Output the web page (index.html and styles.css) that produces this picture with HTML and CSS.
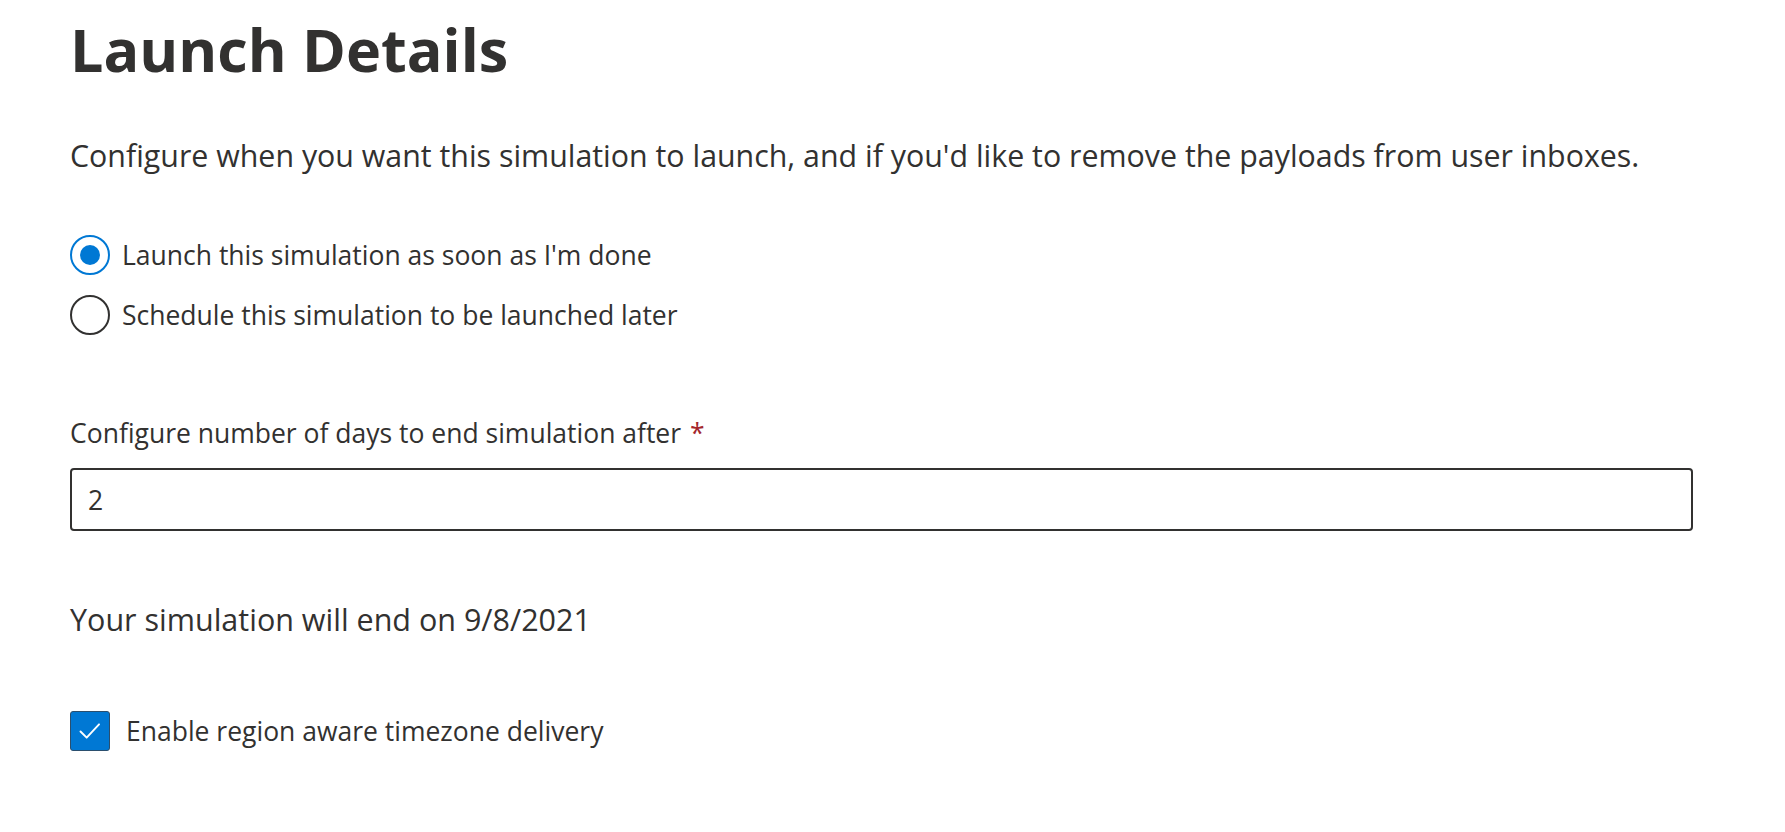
FILE: index.html
```html
<!DOCTYPE html>
<html lang="en">
<head>
<meta charset="utf-8">
<title>Launch Details</title>
<link rel="stylesheet" href="styles.css">
</head>
<body>
<main class="page">
  <h1 class="title">Launch Details</h1>
  <p class="desc">Configure when you want this simulation to launch, and if you'd like to remove the payloads from user inboxes.</p>

  <div class="radio-group" role="radiogroup">
    <label class="radio-row">
      <span class="radio radio-checked"><span class="radio-dot"></span></span>
      <span class="radio-label">Launch this simulation as soon as I'm done</span>
    </label>
    <label class="radio-row">
      <span class="radio"></span>
      <span class="radio-label">Schedule this simulation to be launched later</span>
    </label>
  </div>

  <div class="field">
    <label class="field-label">Configure number of days to end simulation after<span class="req">*</span></label>
    <div class="input">2</div>
  </div>

  <p class="end-date">Your simulation will end on 9/8/2021</p>

  <label class="check-row">
    <span class="checkbox">
      <svg viewBox="0 0 40 40" width="38" height="38" aria-hidden="true">
        <path d="M10 20.5 L16.5 27 L29.5 13" fill="none" stroke="#ffffff" stroke-width="2" stroke-linecap="round" stroke-linejoin="round"/>
      </svg>
    </span>
    <span class="check-label">Enable region aware timezone delivery</span>
  </label>
</main>
</body>
</html>
```

FILE: styles.css
```css
html, body {
  margin: 0;
  padding: 0;
  background: #ffffff;
}

body {
  font-family: "Open Sans", "Noto Sans", "Liberation Sans", sans-serif;
  color: #323130;
}

.page {
  display: flex;
  flex-direction: column;
  align-items: flex-start;
  padding: 14px 92px 0 70px;
}

.title {
  margin: 0;
  font-size: 59.3px;
  font-weight: 700;
  line-height: 70px;
  color: #323130;
}

.desc {
  margin: 52px 0 0;
  font-size: 30.35px;
  line-height: 40px;
}

.radio-group {
  margin-top: 59px;
  display: flex;
  flex-direction: column;
  gap: 20px;
}

.radio-row {
  display: flex;
  align-items: center;
  height: 40px;
  gap: 12px;
  cursor: pointer;
}

.radio {
  box-sizing: border-box;
  width: 40px;
  height: 40px;
  border: 2px solid #323130;
  border-radius: 50%;
  display: flex;
  align-items: center;
  justify-content: center;
  flex: none;
}

.radio-checked {
  border-color: #0078d4;
}

.radio-dot {
  width: 20px;
  height: 20px;
  border-radius: 50%;
  background: #0078d4;
}

.radio-label,
.check-label {
  font-size: 26.5px;
  line-height: 36px;
}

.field {
  margin-top: 80px;
  width: 100%;
  display: flex;
  flex-direction: column;
}

.field-label {
  font-size: 26.5px;
  line-height: 36px;
}

.req {
  color: #a4262c;
  padding-left: 9px;
}

.input {
  box-sizing: border-box;
  margin-top: 17px;
  width: 100%;
  height: 63px;
  border: 2px solid #323130;
  border-radius: 4px;
  padding: 0 16px;
  display: flex;
  align-items: center;
  font-size: 26.5px;
}

.end-date {
  margin: 68px 0 0;
  font-size: 30.5px;
  line-height: 40px;
}

.check-row {
  margin-top: 72px;
  display: flex;
  align-items: center;
  height: 40px;
  gap: 16px;
  cursor: pointer;
}

.checkbox {
  box-sizing: border-box;
  width: 40px;
  height: 40px;
  background: #0078d4;
  border: 1px solid #2b4f6e;
  border-radius: 3px;
  display: flex;
  align-items: center;
  justify-content: center;
  flex: none;
}
```
